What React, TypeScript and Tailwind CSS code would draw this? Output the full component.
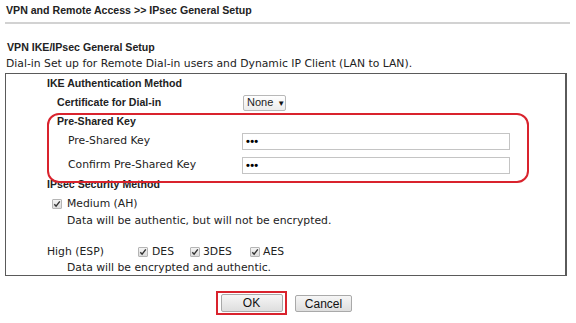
import React from "react";

const bold = "font-['Liberation_Sans',Arial,sans-serif] font-bold text-[10.6px] text-[#222]";
const reg = "font-['DejaVu_Sans',Verdana,sans-serif] text-[10.8px] text-[#222]";

function Check() {
  return (
    <span className="inline-flex w-[10px] h-[10px] items-center justify-center border border-[#b5b5b5] bg-gradient-to-b from-[#f4f4f4] to-[#dcdcdc] rounded-[1px]">
      <svg width="8" height="8" viewBox="0 0 8 8">
        <path d="M1.3 4.2 L3.1 6.2 L6.8 1.4" fill="none" stroke="#333" strokeWidth="1.4" />
      </svg>
    </span>
  );
}

function Dots() {
  return (
    <div className="w-[268px] h-[17px] border border-[#c4c4c4] bg-white flex items-center pl-[3px]">
      <span className="font-['Liberation_Sans',Arial,sans-serif] font-bold text-[11px] leading-none tracking-[0.3px] text-black">•••</span>
    </div>
  );
}

export default function App() {
  return (
    <div className="w-[576px] h-[323px] bg-white overflow-hidden">
      <div className="h-[22px] pl-[6px] flex items-center">
        <span className={bold}>VPN and Remote Access &gt;&gt; IPsec General Setup</span>
      </div>
      <div className="ml-[5px] w-[565px] h-[2px] bg-[#d2d2d2]" />
      <div className="h-[16px]" />
      <div className="h-[16px] pl-[7px] flex items-center">
        <span className={bold}>VPN IKE/IPsec General Setup</span>
      </div>
      <div className="h-[16px] pl-[6px] flex items-center">
        <span className={reg}>Dial-in Set up for Remote Dial-in users and Dynamic IP Client (LAN to LAN).</span>
      </div>
      <div className="h-[1px]" />
      <div className="ml-[5px] w-[562px] border border-[#5a5a5a] border-r-2 border-b-[1px]">
        <div className="h-[19px] pl-[41px] flex items-center">
          <span className={bold}>IKE Authentication Method</span>
        </div>
        <div className="h-[19px] pl-[51px] flex items-center">
          <span className={`${bold} w-[186px]`}>Certificate for Dial-in</span>
          <div className="h-[16px] w-[43px] border border-[#b8b8b8] rounded-[2px] bg-gradient-to-b from-white to-[#ececec] flex items-center pl-[3px] gap-[4px]">
            <span className="font-['Liberation_Sans',Arial,sans-serif] text-[11px] text-[#222]">None</span>
            <span className="text-[8px] text-[#111] leading-none">▼</span>
          </div>
        </div>
        <div className="h-[1px]" />
        <div className="relative z-10 ml-[41px] w-[482px] h-[70px] border-2 border-[#d9232d] rounded-[12px]">
          <div className="h-[14px] pl-[8px] flex items-center">
            <span className={bold}>Pre-Shared Key</span>
          </div>
          <div className="h-[24px] pl-[19px] flex items-center">
            <span className={`${reg} w-[174px]`}>Pre-Shared Key</span>
            <Dots />
          </div>
          <div className="h-[24px] pl-[19px] flex items-center">
            <span className={`${reg} w-[174px]`}>Confirm Pre-Shared Key</span>
            <Dots />
          </div>
        </div>
        <div className="mt-[-7px] h-[18px] pl-[41px] flex items-center">
          <span className={bold}>IPsec Security Method</span>
        </div>
        <div className="h-[20px] pl-[46px] flex items-center">
          <Check />
          <span className={`${reg} ml-[5px]`}>Medium (AH)</span>
        </div>
        <div className="h-[14px] pl-[61px] flex items-center">
          <span className={reg}>Data will be authentic, but will not be encrypted.</span>
        </div>
        <div className="h-[14px]" />
        <div className="h-[20px] pl-[41px] flex items-center">
          <span className={`${reg} w-[91px]`}>High (ESP)</span>
          <Check />
          <span className={`${reg} ml-[4px] w-[38px]`}>DES</span>
          <Check />
          <span className={`${reg} ml-[3px] w-[47px]`}>3DES</span>
          <Check />
          <span className={`${reg} ml-[3px]`}>AES</span>
        </div>
        <div className="h-[13px] pl-[61px] flex items-center">
          <span className={reg}>Data will be encrypted and authentic.</span>
        </div>
      </div>
      <div className="h-[15px]" />
      <div className="flex items-start">
        <div className="ml-[216px] w-[71px] h-[24px] border-2 border-[#d9232d] flex items-center justify-center">
          <div className="w-[62px] h-[18px] border border-[#a9a9a9] rounded-[2px] bg-gradient-to-b from-[#f6f6f6] to-[#dedede] flex items-center justify-center">
            <span className="font-['Liberation_Sans',Arial,sans-serif] text-[12px] text-[#111]">OK</span>
          </div>
        </div>
        <div className="ml-[8px] mt-[4px] w-[57px] h-[17px] border border-[#a9a9a9] rounded-[2px] bg-gradient-to-b from-[#f6f6f6] to-[#dedede] flex items-center justify-center">
          <span className="font-['Liberation_Sans',Arial,sans-serif] text-[12px] text-[#111]">Cancel</span>
        </div>
      </div>
    </div>
  );
}
